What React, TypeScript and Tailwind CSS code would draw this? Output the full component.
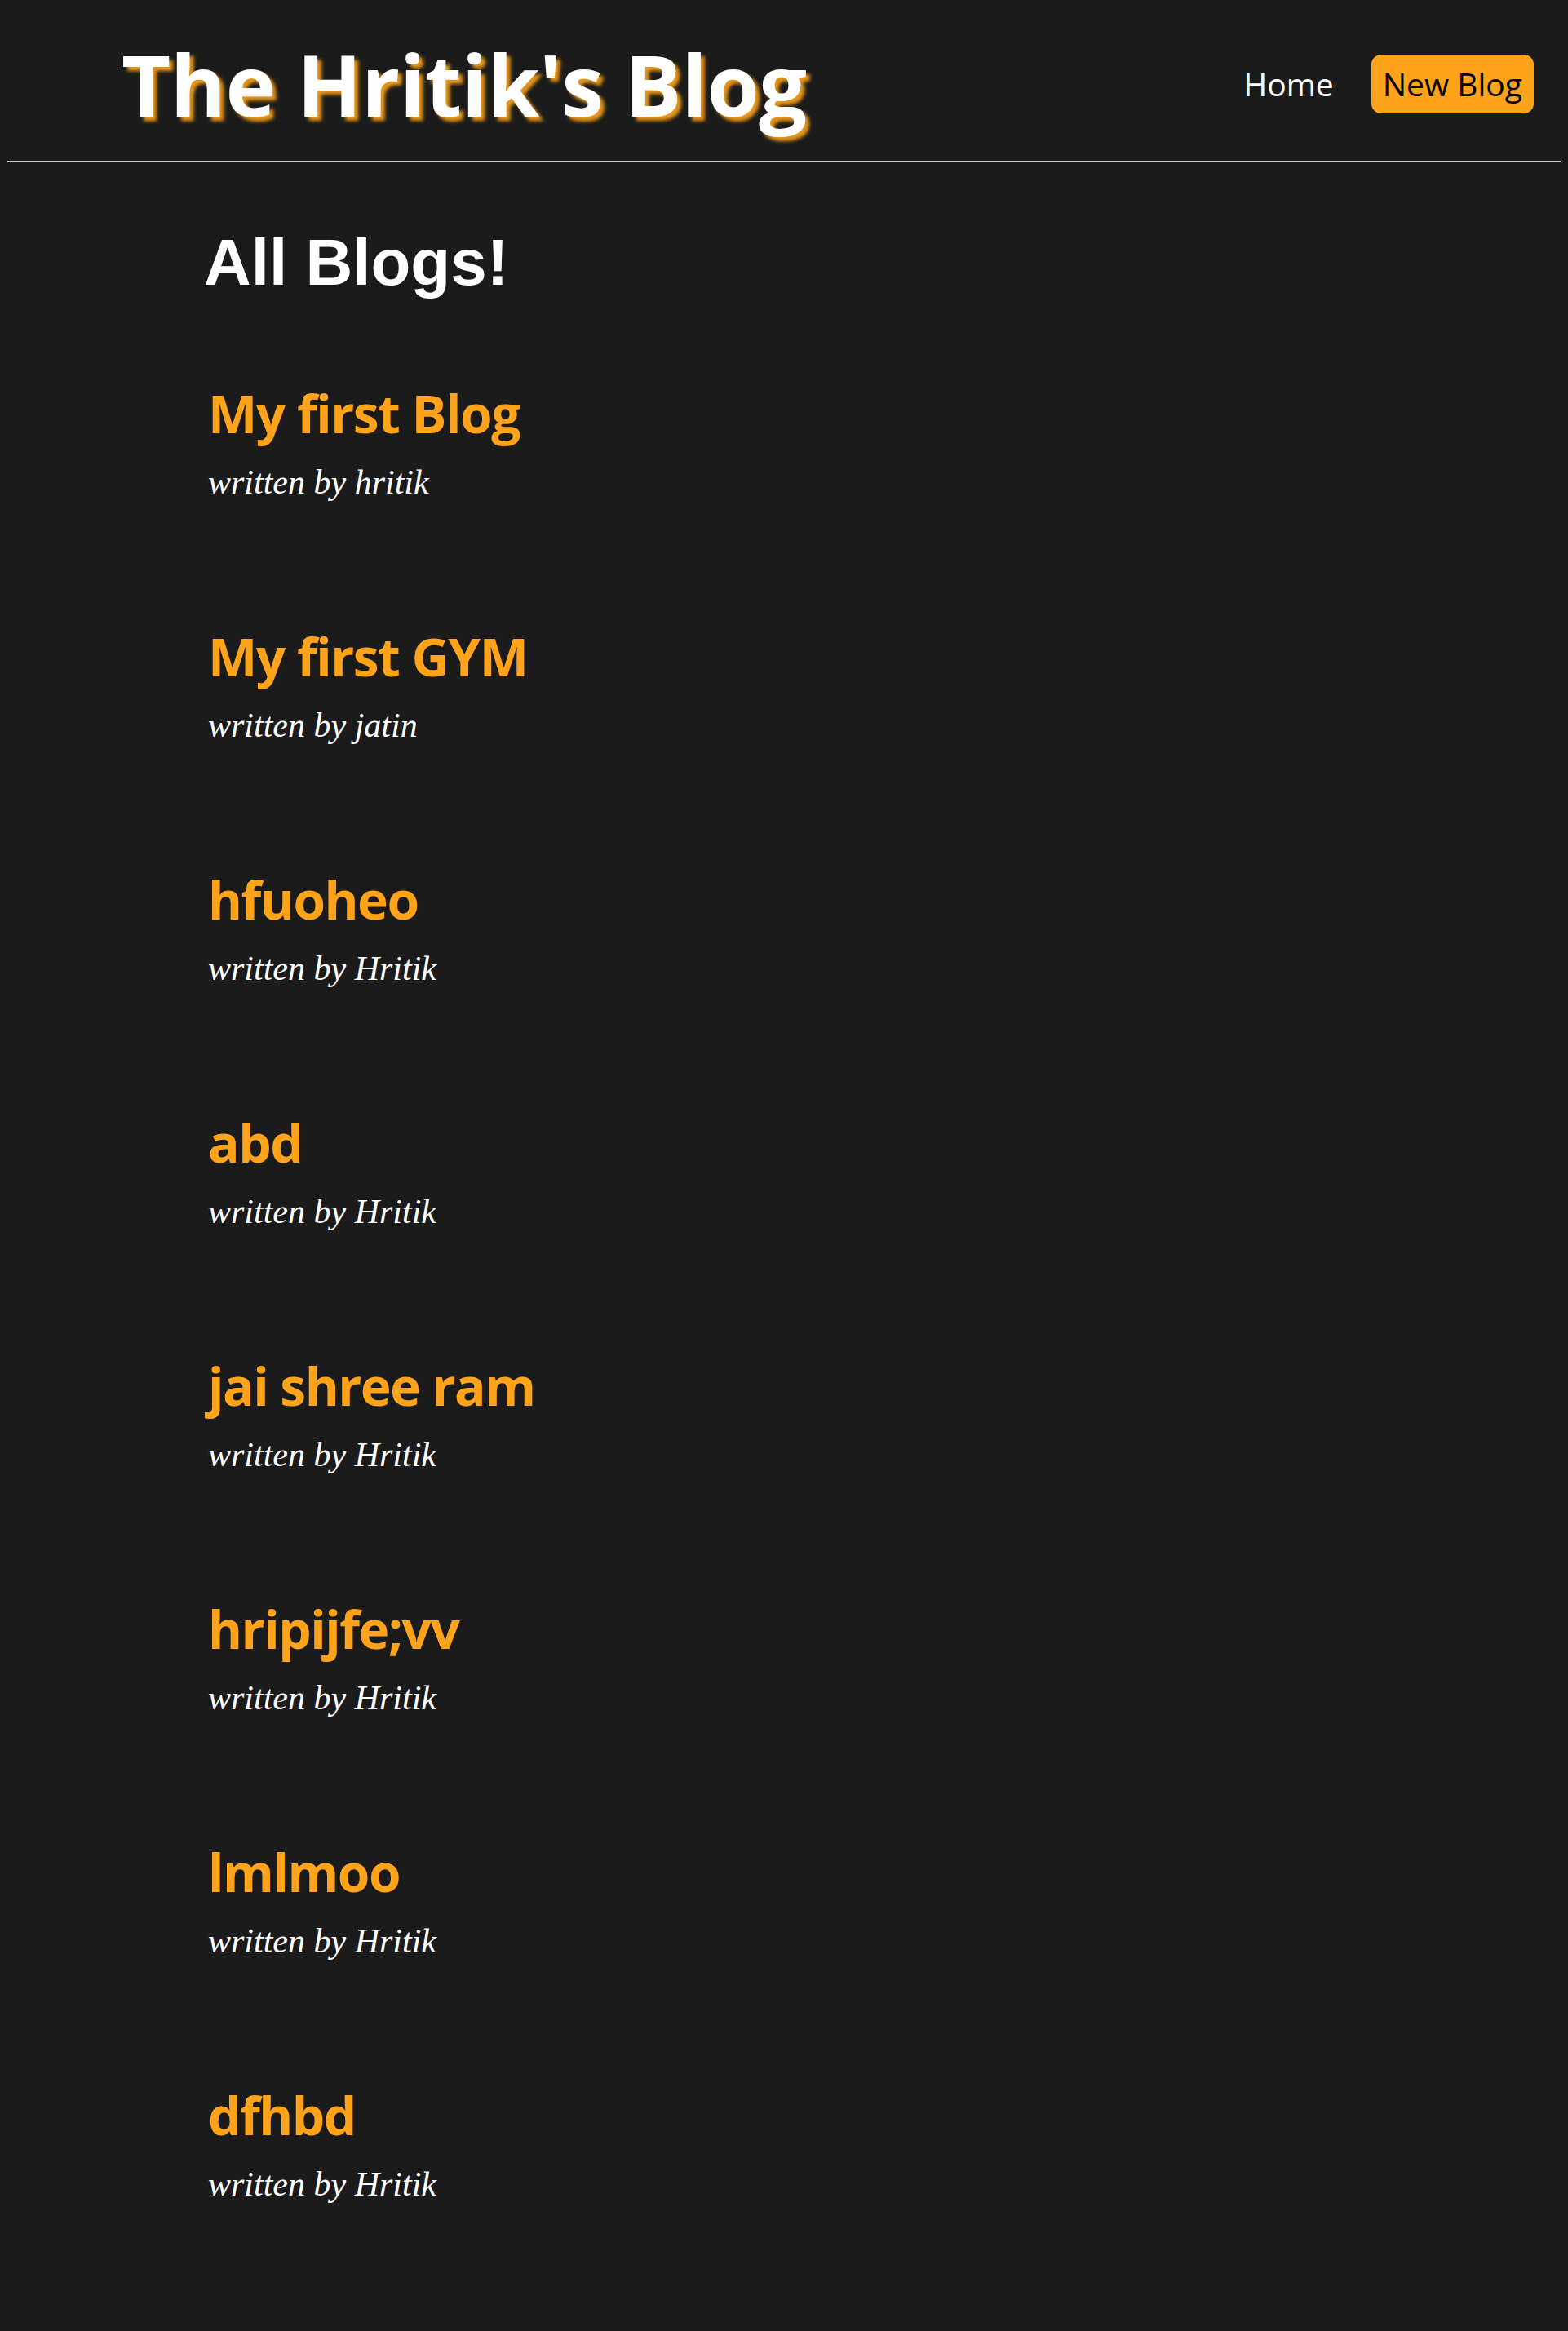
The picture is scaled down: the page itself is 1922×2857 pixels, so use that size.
const blogs = [
  { id: 1, title: 'My first Blog', author: 'hritik' },
  { id: 2, title: 'My first GYM', author: 'jatin' },
  { id: 3, title: 'hfuoheo', author: 'Hritik' },
  { id: 4, title: 'abd', author: 'Hritik' },
  { id: 5, title: 'jai shree ram', author: 'Hritik' },
  { id: 6, title: 'hripijfe;vv', author: 'Hritik' },
  { id: 7, title: 'lmlmoo', author: 'Hritik' },
  { id: 8, title: 'dfhbd', author: 'Hritik' },
]

export default function App() {
  return (
    <div className="min-h-screen bg-[#1b1b1b] px-[9px] pt-2 pb-10 font-['Open_Sans',sans-serif]">
      <nav className="flex h-[191px] items-center justify-between border-b-2 border-[#c8c8c8] pl-[140px] pr-[33px]">
        <h1 className="text-[104px] leading-none font-bold tracking-[-0.5px] text-white [text-shadow:5px_5px_4px_#e8961a]">
          The Hritik's Blog
        </h1>
        <div className="flex items-center gap-[46px]">
          <a href="/" className="text-[39px] leading-none text-white">
            Home
          </a>
          <a href="/create" className="rounded-[12px] bg-[#ffa31a] px-[14px] py-[11px] text-[39px] leading-[50px] text-black">
            New Blog
          </a>
        </div>
      </nav>

      <main className="pl-[241px]">
        <h2 className="mt-[83px] font-['Liberation_Sans',Arial,sans-serif] text-[80px] leading-none font-bold text-white">
          All Blogs!
        </h2>
        <div className="mt-[107px] flex flex-col">
          {blogs.map((blog) => (
            <div key={blog.id} className="h-[298px] pl-[5px]">
              <h3 className="text-[64px] leading-[1.2] font-bold tracking-[-1.5px] text-[#ffa31a]">{blog.title}</h3>
              <p className="mt-[20px] font-['Liberation_Serif',serif] text-[42px] leading-[1.2] italic text-white">
                written by {blog.author}
              </p>
            </div>
          ))}
        </div>
      </main>
    </div>
  )
}
